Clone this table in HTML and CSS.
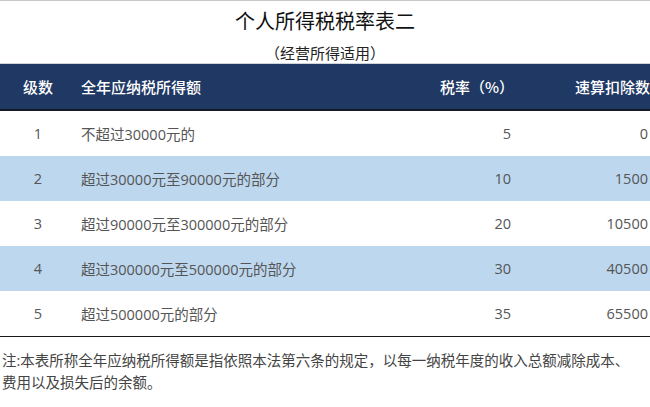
FILE: index.html
```html
<!DOCTYPE html>
<html lang="zh-CN">
<head>
<meta charset="utf-8">
<title>个人所得税税率表二</title>
<link rel="stylesheet" href="styles.css">
</head>
<body>
<div class="page">
  <h1 class="title">个人所得税税率表二</h1>
  <p class="subtitle">（经营所得适用）</p>
  <table class="rates">
    <colgroup>
      <col class="c-level">
      <col class="c-range">
      <col class="c-rate">
      <col class="c-deduct">
    </colgroup>
    <thead>
      <tr>
        <th class="level">级数</th>
        <th class="range">全年应纳税所得额</th>
        <th class="rate">税率（%）</th>
        <th class="deduct">速算扣除数</th>
      </tr>
    </thead>
    <tbody>
      <tr>
        <td class="level">1</td>
        <td class="range">不超过30000元的</td>
        <td class="rate">5</td>
        <td class="deduct">0</td>
      </tr>
      <tr class="alt">
        <td class="level">2</td>
        <td class="range">超过30000元至90000元的部分</td>
        <td class="rate">10</td>
        <td class="deduct">1500</td>
      </tr>
      <tr>
        <td class="level">3</td>
        <td class="range">超过90000元至300000元的部分</td>
        <td class="rate">20</td>
        <td class="deduct">10500</td>
      </tr>
      <tr class="alt">
        <td class="level">4</td>
        <td class="range">超过300000元至500000元的部分</td>
        <td class="rate">30</td>
        <td class="deduct">40500</td>
      </tr>
      <tr>
        <td class="level">5</td>
        <td class="range">超过500000元的部分</td>
        <td class="rate">35</td>
        <td class="deduct">65500</td>
      </tr>
    </tbody>
  </table>
  <p class="note">注:本表所称全年应纳税所得额是指依照本法第六条的规定，以每一纳税年度的收入总额减除成本、费用以及损失后的余额。</p>
</div>
</body>
</html>
```
FILE: styles.css
```css
html, body {
  margin: 0;
  padding: 0;
  background: #fff;
}

.page {
  width: 650px;
  border-top: 1px solid #c8c8c8;
  font-family: "Open Sans", "Noto Sans CJK SC", sans-serif;
  color: #555;
}

.title {
  margin: 0;
  height: 40px;
  line-height: 40px;
  font-family: "Noto Sans CJK SC", sans-serif;
  font-size: 20px;
  font-weight: 400;
  color: #111;
  text-align: center;
}

.subtitle {
  margin: 0;
  height: 21px;
  padding-top: 1px;
  line-height: 21px;
  font-family: "Noto Sans CJK SC", sans-serif;
  font-size: 15px;
  color: #222;
  text-align: center;
}

.rates {
  width: 650px;
  table-layout: fixed;
  border-collapse: collapse;
  border-top: 1px solid #cfd3da;
  border-bottom: 1px solid #1a1a1a;
}

.c-level { width: 76px; }
.c-range { width: 344px; }
.c-rate { width: 91px; }
.c-deduct { width: 139px; }

.rates th {
  height: 45px;
  padding: 0;
  background: #203864;
  color: #fff;
  font-family: "Noto Sans CJK SC", sans-serif;
  font-size: 15px;
  font-weight: 500;
  white-space: nowrap;
  border-bottom: 2px solid #141a24;
  text-align: left;
}

.rates td {
  height: 45px;
  padding: 0;
  font-size: 14.5px;
  white-space: nowrap;
  color: #555;
}

.rates tr.alt td {
  background: #bdd7ee;
}

.rates .level {
  text-align: center;
}

.rates th.range,
.rates td.range {
  padding-left: 5px;
}

.rates th.rate {
  padding-left: 20px;
}

.rates td.rate {
  text-align: right;
  padding-right: 0;
}

.rates th.deduct {
  padding-left: 64px;
}

.rates td.deduct {
  text-align: right;
  padding-right: 2px;
}

.note {
  margin: 0;
  padding: 13px 12px 0 2px;
  font-size: 14.5px;
  line-height: 22px;
  color: #444;
}
```
